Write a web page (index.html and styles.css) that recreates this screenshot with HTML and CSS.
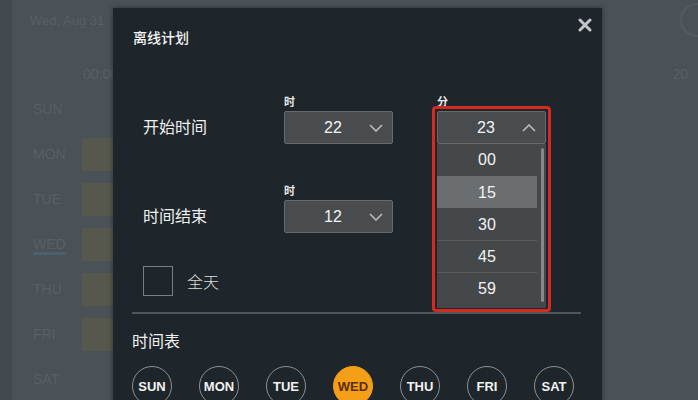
FILE: index.html
```html
<!DOCTYPE html>
<html lang="zh">
<head>
    <meta charset="UTF-8">
    <meta name="viewport" content="width=device-width, initial-scale=1.0">
    <title>离线计划</title>
    <link rel="stylesheet" href="styles.css">
</head>
<body>
    <!-- Background page (dimmed) -->
    <div class="page">
        <div class="page-top">
            <span class="page-date">Wed, Aug 31</span>
            <span class="page-logo"></span>
        </div>
        <div class="page-axis">
            <span>00:00</span>
            <span class="axis-end">20</span>
        </div>
        <div class="schedule">
            <div class="day">SUN</div><div class="track"></div>
            <div class="day">MON</div><div class="track"><span class="slot"></span></div>
            <div class="day">TUE</div><div class="track"><span class="slot"></span></div>
            <div class="day today">WED</div><div class="track"><span class="slot"></span></div>
            <div class="day">THU</div><div class="track"><span class="slot"></span></div>
            <div class="day">FRI</div><div class="track"><span class="slot"></span></div>
            <div class="day">SAT</div><div class="track"></div>
        </div>
    </div>

    <!-- Offline schedule dialog -->
    <div class="modal">
        <div class="modal-header">
            <h2>离线计划</h2>
        </div>
        <button class="close" type="button" aria-label="关闭">
            <svg width="14" height="14" viewBox="0 0 14 14"><path d="M2 2 L12 12 M12 2 L2 12" stroke="#c3c6c9" stroke-width="3" stroke-linecap="round"/></svg>
        </button>

        <div class="form">
            <div class="time-row">
                <div class="row-label">开始时间</div>
                <div class="field">
                    <div class="field-label">时</div>
                    <div class="select">
                        <span class="value">22</span>
                        <svg width="14" height="8" viewBox="0 0 14 8"><polyline points="1,1 7,7 13,1" fill="none" stroke="#b8bbbe" stroke-width="1.6"/></svg>
                    </div>
                </div>
                <div class="field">
                    <div class="field-label">分</div>
                    <div class="select-wrap">
                        <div class="select open">
                            <span class="value">23</span>
                            <svg width="14" height="8" viewBox="0 0 14 8"><polyline points="1,7 7,1 13,7" fill="none" stroke="#b8bbbe" stroke-width="1.6"/></svg>
                        </div>
                        <ul class="options">
                            <li class="option">00</li>
                            <li class="option active">15</li>
                            <li class="option">30</li>
                            <li class="option">45</li>
                            <li class="option">59</li>
                        </ul>
                        <span class="mark"></span>
                    </div>
                </div>
            </div>

            <div class="time-row second">
                <div class="row-label">时间结束</div>
                <div class="field">
                    <div class="field-label">时</div>
                    <div class="select">
                        <span class="value">12</span>
                        <svg width="14" height="8" viewBox="0 0 14 8"><polyline points="1,1 7,7 13,1" fill="none" stroke="#b8bbbe" stroke-width="1.6"/></svg>
                    </div>
                </div>
            </div>

            <label class="check-row">
                <span class="checkbox"></span>
                <span>全天</span>
            </label>
        </div>

        <hr class="divider">

        <h3 class="section-title">时间表</h3>
        <div class="days">
            <span class="day-btn">SUN</span>
            <span class="day-btn">MON</span>
            <span class="day-btn">TUE</span>
            <span class="day-btn selected">WED</span>
            <span class="day-btn">THU</span>
            <span class="day-btn">FRI</span>
            <span class="day-btn">SAT</span>
        </div>
    </div>
</body>
</html>
```

FILE: styles.css
```css
body {
    margin: 0;
    padding: 0;
    height: 400px;
    overflow: hidden;
    position: relative;
    background-color: #4a5258;
    font-family: "Liberation Sans", "Noto Sans CJK SC", Arial, sans-serif;
    color: #f0f0f0;
}

/* dimmed page behind the dialog */
.page {
    height: 400px;
    border-left: 12px solid #424950;
    color: #585f66;
    font-size: 13px;
}

.page-top {
    height: 40px;
    display: flex;
    align-items: center;
    justify-content: space-between;
    padding-left: 18px;
}

.page-logo {
    width: 30px;
    height: 30px;
    border: 2px solid #535b62;
    border-radius: 50%;
    margin-right: -16px;
}

.page-axis {
    display: flex;
    justify-content: space-between;
    margin-top: 24px;
    padding-left: 71px;
    line-height: 20px;
    font-size: 14px;
}

.axis-end {
    margin-right: 10px;
}

.schedule {
    display: grid;
    grid-template-columns: 70px 1fr;
    grid-auto-rows: 45px;
    margin-top: 3px;
}

.day {
    padding-left: 21px;
    line-height: 45px;
    font-size: 14px;
}

.day.today {
    text-decoration: underline;
    text-decoration-color: #4c6070;
    text-decoration-thickness: 3px;
    text-underline-offset: 3px;
}

.slot {
    display: block;
    width: 60px;
    height: 33px;
    margin-top: 6px;
    background-color: #56584e;
}

/* dialog */
.modal {
    position: absolute;
    left: 113px;
    top: 8px;
    width: 489px;
    height: 420px;
    box-sizing: border-box;
    padding: 0 21px 0 19px;
    background-color: #1e262b;
    box-shadow: 0 0 5px rgba(0, 0, 0, 0.45);
}

.modal-header h2 {
    margin: 0;
    padding-top: 20px;
    padding-left: 1px;
    font-size: 14px;
    line-height: 20px;
    font-weight: 500;
    color: #f4f4f4;
}

.close {
    position: absolute;
    top: 10px;
    right: 10px;
    padding: 0;
    border: none;
    background: none;
    width: 14px;
    height: 14px;
    cursor: pointer;
}

.close svg {
    display: block;
}

.form {
    padding-left: 11px;
}

.time-row {
    display: grid;
    grid-template-columns: 97px 109px 109px;
    column-gap: 44px;
    align-items: end;
    margin-top: 46px;
}

.time-row.second {
    margin-top: 39px;
}

.row-label {
    font-size: 16px;
    line-height: 33px;
    color: #f0f0f0;
    white-space: nowrap;
}

.field-label {
    font-size: 11px;
    line-height: 17px;
    font-weight: bold;
    color: #e8e8e8;
}

.select {
    display: flex;
    align-items: center;
    height: 33px;
    box-sizing: border-box;
    padding-right: 9px;
    background-color: #494c4f;
    border: 1px solid #67696c;
    border-radius: 2px;
}

.select .value {
    flex: 1;
    padding-left: 12px;
    text-align: center;
    font-size: 16px;
    color: #f2f2f2;
}

.select-wrap {
    position: relative;
}

.options {
    position: absolute;
    top: 33px;
    left: 0;
    width: 109px;
    margin: 0;
    padding: 0 0 4px;
    list-style: none;
    box-sizing: border-box;
    background-color: #45484b;
    z-index: 2;
}

.options::after {
    content: "";
    position: absolute;
    right: 2px;
    top: 4px;
    bottom: 6px;
    width: 3px;
    background-color: #85888b;
    border-radius: 2px;
}

.option {
    height: 32px;
    line-height: 32px;
    width: 100px;
    box-sizing: border-box;
    text-align: center;
    font-size: 16px;
    color: #f2f2f2;
}

.option + .option {
    border-top: 1px solid #585c5f;
    line-height: 31px;
}

.option.active {
    background-color: #6a6e71;
}

.option.active + .option,
.option:nth-child(1) + .option {
    border-top-color: transparent;
}

.mark {
    position: absolute;
    top: -5px;
    left: -5px;
    width: 119px;
    height: 206px;
    box-sizing: border-box;
    border: 3px solid #d62a20;
    border-radius: 4px;
    z-index: 3;
}

.check-row {
    display: flex;
    align-items: center;
    margin-top: 33px;
}

.checkbox {
    width: 30px;
    height: 30px;
    box-sizing: border-box;
    border: 1px solid #7b7e81;
    margin-right: 14px;
}

.check-row span + span {
    font-size: 16px;
    font-weight: 300;
    color: #dcdcdc;
}

.divider {
    margin: 16px 0 0;
    border: none;
    height: 2px;
    background-color: #50565a;
}

.section-title {
    margin: 18px 0 0;
    font-size: 16px;
    line-height: 20px;
    font-weight: normal;
    color: #f2f2f2;
}

.days {
    display: flex;
    gap: 27px;
    margin-top: 14px;
}

.day-btn {
    width: 40px;
    height: 40px;
    box-sizing: border-box;
    border: 1px solid #8e9194;
    border-radius: 50%;
    display: flex;
    align-items: center;
    justify-content: center;
    font-size: 13px;
    font-weight: bold;
    color: #f2f2f2;
}

.day-btn.selected {
    background-color: #f59e17;
    border-color: #f59e17;
    color: #5a2f0c;
}
```
